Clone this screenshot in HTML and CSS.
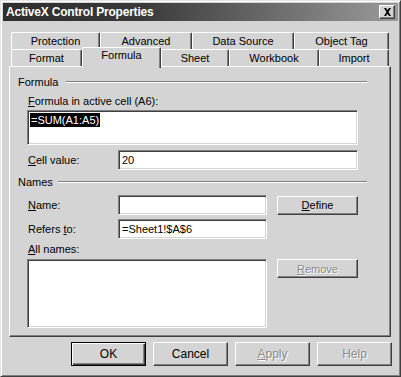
FILE: index.html
```html
<!DOCTYPE html>
<html lang="en">
<head>
    <meta charset="UTF-8">
    <title>ActiveX Control Properties</title>
    <link rel="stylesheet" href="styles.css">
</head>
<body>
    <div class="window">
        <div class="titlebar">
            <span class="title">ActiveX Control Properties</span>
            <span class="close">
                <svg width="9" height="8" viewBox="0 0 9 8"><path d="M1 0h2l1.5 2.3L6 0h2L5.5 4 8 8H6L4.5 5.7 3 8H1l2.5-4z" fill="#000"/></svg>
            </span>
        </div>
        <div class="tabs">
            <div class="tab-row back">
                <div class="tab">Protection</div>
                <div class="tab">Advanced</div>
                <div class="tab">Data Source</div>
                <div class="tab">Object Tag</div>
            </div>
            <div class="tab-row front">
                <div class="tab">Format</div>
                <div class="tab selected">Formula</div>
                <div class="tab">Sheet</div>
                <div class="tab">Workbook</div>
                <div class="tab">Import</div>
            </div>
        </div>
        <div class="panel">
            <div class="group-head"><span>Formula</span><i class="etch"></i></div>
            <div class="group">
                <div class="label"><u>F</u>ormula in active cell (A6):</div>
                <div class="field area"><span class="sel">=SUM(A1:A5)</span></div>
                <div class="row cell-row">
                    <div class="label wide"><u>C</u>ell value:</div>
                    <div class="field long">20</div>
                </div>
            </div>
            <div class="group-head names-head"><span>Names</span><i class="etch"></i></div>
            <div class="group">
                <div class="row first">
                    <div class="label wide"><u>N</u>ame:</div>
                    <div class="field short"></div>
                    <div class="btn"><span class="u">D</span>efine</div>
                </div>
                <div class="row second">
                    <div class="label wide">Refers <u>t</u>o:</div>
                    <div class="field short">=Sheet1!$A$6</div>
                </div>
                <div class="label all"><u>A</u>ll names:</div>
                <div class="row list-row">
                    <div class="field list"></div>
                    <div class="btn off"><u>R</u>emove</div>
                </div>
            </div>
        </div>
        <div class="actions">
            <div class="btn big default">OK</div>
            <div class="btn big">Cancel</div>
            <div class="btn big off"><u>A</u>pply</div>
            <div class="btn big off">Help</div>
        </div>
    </div>
</body>
</html>
```

FILE: styles.css
```css
html, body{
    margin: 0;
    background: #d4d4d4;
}
body{
    font-family: "Liberation Sans", Arial, sans-serif;
    font-size: 11px;
    color: #000;
}
.window{
    box-sizing: border-box;
    width: 401px;
    height: 377px;
    padding: 2px;
    background: #d4d4d4;
    border: 1px solid;
    border-color: #e4e4e4 #404040 #404040 #e4e4e4;
    box-shadow: inset 1px 1px #fff, inset -1px -1px #808080;
}
.titlebar{
    height: 18px;
    display: flex;
    align-items: center;
    justify-content: space-between;
    padding: 0 3px 0 3px;
    background: linear-gradient(to right, #2e2e2e, #3a3a3a 35%, #9a9a9a);
}
.title{
    color: #fff;
    font-weight: bold;
    font-size: 12px;
    letter-spacing: -0.2px;
}
.close{
    box-sizing: border-box;
    width: 16px;
    height: 14px;
    display: flex;
    align-items: center;
    justify-content: center;
    background: #d4d4d4;
    border: 1px solid;
    border-color: #fff #404040 #404040 #fff;
    box-shadow: inset -1px -1px #808080;
}

/* tabs */
.tabs{
    margin-top: 11px;
    padding-left: 8px;
}
.tab-row{
    display: grid;
    height: 17px;
}
.back{
    grid-template-columns: 89px 92px 102px 95px;
}
.front{
    grid-template-columns: 71px 79px 68px 90px 70px;
    position: relative;
    z-index: 1;
}
.tab{
    box-sizing: border-box;
    height: 17px;
    text-align: center;
    line-height: 17px;
    border-left: 1px solid #fff;
    border-top: 1px solid #fff;
    border-right: 1px solid #404040;
    box-shadow: inset -1px 0 #808080;
    border-radius: 2px 2px 0 0;
}
.tab.selected{
    height: 21px;
    margin-top: -2px;
    line-height: 15px;
    background: #d4d4d4;
}

/* panel */
.panel{
    box-sizing: border-box;
    height: 271px;
    margin: 0 7px 0 6px;
    padding: 8px 0 0 8px;
    border: 1px solid;
    border-color: #fff #404040 #404040 #fff;
    box-shadow: inset -1px -1px #808080;
}
.group-head{
    display: flex;
    align-items: center;
    height: 14px;
    width: 349px;
}
.group-head span{
    margin-right: 8px;
}
.etch{
    flex: 1;
    height: 1px;
    background: #808080;
    border-bottom: 1px solid #fff;
}
.names-head{
    margin-top: 5px;
}
.names-head span{
    margin-right: 5px;
}
.group{
    padding-left: 9px;
}
.label{
    height: 14px;
    line-height: 14px;
    margin-top: 5px;
    padding-left: 1px;
}
.row{
    display: flex;
    align-items: center;
}
.row .label{
    margin-top: 0;
}
.wide{
    width: 90px;
}
.field{
    box-sizing: border-box;
    height: 20px;
    background: #fff;
    border: 1px solid;
    border-color: #808080 #fff #fff #808080;
    box-shadow: inset 1px 1px #404040, inset -1px -1px #d4d4d4;
    padding: 2px 3px 0 3px;
    line-height: 15px;
    white-space: nowrap;
}
.area{
    width: 331px;
    height: 35px;
    margin-top: 2px;
    padding: 2px 2px 0 2px;
}
.sel{
    background: #000;
    color: #fff;
    display: inline-block;
    line-height: 14px;
    padding: 0 1px;
}
.cell-row{
    margin-top: 5px;
}
.long{
    width: 240px;
}
.short{
    width: 149px;
}
.row.first{
    margin-top: 6px;
}
.row.second{
    margin-top: 4px;
}
.label.all{
    margin-top: 3px;
}
.list-row{
    margin-top: 3px;
    align-items: flex-start;
}
.list{
    width: 240px;
    height: 69px;
}

/* buttons */
.btn{
    box-sizing: border-box;
    width: 81px;
    height: 19px;
    margin-left: 10px;
    display: flex;
    align-items: center;
    justify-content: center;
    background: #d4d4d4;
    border: 1px solid;
    border-color: #fff #404040 #404040 #fff;
    box-shadow: inset -1px -1px #808080;
}
.btn .u{
    text-decoration: underline;
}
.btn.off{
    color: #8a8a8a;
    text-shadow: 1px 1px #fff;
}
.actions{
    display: flex;
    justify-content: flex-end;
    gap: 7px;
    margin: 5px 6px 0 0;
}
.btn.big{
    width: 75px;
    height: 24px;
    margin-left: 0;
    font-size: 12px;
}
.btn.default{
    border: 1px solid #000;
    box-shadow: inset 1px 1px #fff, inset -1px -1px #404040, inset -2px -2px #808080;
}
```
